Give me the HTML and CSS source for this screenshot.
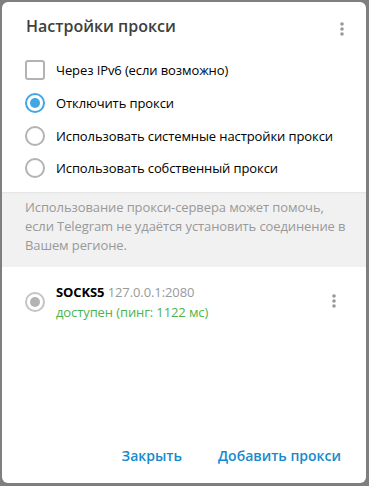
FILE: index.html
```html
<!DOCTYPE html>
<html lang="ru">
<head>
<meta charset="utf-8">
<link rel="stylesheet" href="styles.css">
</head>
<body>
<div class="dialog">
  <div class="header">
    <div class="title">Настройки прокси</div>
    <svg class="dots" width="4" height="14" viewBox="0 0 4 14"><circle cx="2" cy="2" r="1.8"/><circle cx="2" cy="7" r="1.8"/><circle cx="2" cy="12" r="1.8"/></svg>
  </div>
  <div class="options">
    <div class="opt"><span class="check"></span><span>Через IPv6 (если возможно)</span></div>
    <div class="opt"><span class="radio on"></span><span>Отключить прокси</span></div>
    <div class="opt"><span class="radio"></span><span>Использовать системные настройки прокси</span></div>
    <div class="opt"><span class="radio"></span><span>Использовать собственный прокси</span></div>
  </div>
  <div class="about">Использование прокси-сервера может помочь, если Telegram не удаётся установить соединение в Вашем регионе.</div>
  <div class="proxy">
    <span class="radio dis"></span>
    <div class="pinfo">
      <div class="pline"><b>SOCKS5</b> <span class="addr">127.0.0.1:2080</span></div>
      <div class="status">доступен (пинг: 1122 мс)</div>
    </div>
    <svg class="dots pdots" width="4" height="14" viewBox="0 0 4 14"><circle cx="2" cy="2" r="1.8"/><circle cx="2" cy="7" r="1.8"/><circle cx="2" cy="12" r="1.8"/></svg>
  </div>
  <div class="spacer"></div>
  <div class="buttons">
    <span class="btn">Закрыть</span>
    <span class="btn">Добавить прокси</span>
  </div>
</div>
</body>
</html>
```

FILE: styles.css
```css
html, body { margin: 0; padding: 0; }
body {
  background: #7f7f7f;
  width: 369px;
  height: 486px;
  padding: 2px 3px 3px 2px;
  box-sizing: border-box;
  font-family: "Open Sans", "Noto Sans", sans-serif;
  color: #000;
}
.dialog {
  background: #fff;
  border-radius: 6px;
  height: 100%;
  display: flex;
  flex-direction: column;
  overflow: hidden;
}
.header {
  display: flex;
  align-items: center;
  justify-content: space-between;
  padding: 0 24px 0 24px;
  height: 48px;
}
.title {
  font-size: 16px;
  font-weight: 600;
  color: #404040;
}
.dots { fill: #999; display: block; }
.header .dots { margin-top: 6px; margin-right: -2px; }
.options {
  padding: 4px 0 0 23px;
  display: flex;
  flex-direction: column;
}
.opt {
  display: flex;
  align-items: center;
  height: 32.67px;
  font-size: 13px;
  letter-spacing: -0.1px;
  color: #000;
}
.opt span:last-child { margin-left: 11px; }
.check {
  width: 16px; height: 16px;
  border: 2px solid #b3b3b3;
  border-radius: 3px;
  flex: none;
}
.radio {
  width: 16px; height: 16px;
  border: 2px solid #b3b3b3;
  border-radius: 50%;
  position: relative;
  flex: none;
}
.radio.on { border-color: #40a7e3; }
.radio.on::after, .radio.dis::after {
  content: "";
  position: absolute;
  left: 3px; top: 3px;
  width: 10px; height: 10px;
  border-radius: 50%;
  background: #40a7e3;
}
.radio.dis { border-color: #c4c4c4; }
.radio.dis::after { background: #b3b3b3; }
.about {
  margin-top: 7px;
  background: #f1f1f1;
  box-shadow: inset 0 2px 2px -1px rgba(0,0,0,0.06);
  padding: 6px 14px 12px 23px;
  font-size: 13px;
  line-height: 19px;
  letter-spacing: -0.1px;
  color: #999;
}
.proxy {
  display: flex;
  align-items: flex-start;
  padding: 15px 30px 0 23px;
}
.proxy .radio { margin-top: 10px; }
.pinfo { margin-left: 11px; flex: 1; }
.pline { font-size: 13px; line-height: 20px; letter-spacing: -0.1px; }
.pline b { font-weight: 700; color: #000; }
.addr { color: #999; }
.status { font-size: 13px; line-height: 21px; letter-spacing: -0.1px; color: #4db44d; }
.pdots { margin-top: 12px; }
.spacer { flex: 1; }
.buttons {
  display: flex;
  justify-content: flex-end;
  gap: 36px;
  padding: 0 25px 18px 0;
}
.btn {
  font-size: 14px;
  font-weight: 600;
  color: #168acd;
}
```
